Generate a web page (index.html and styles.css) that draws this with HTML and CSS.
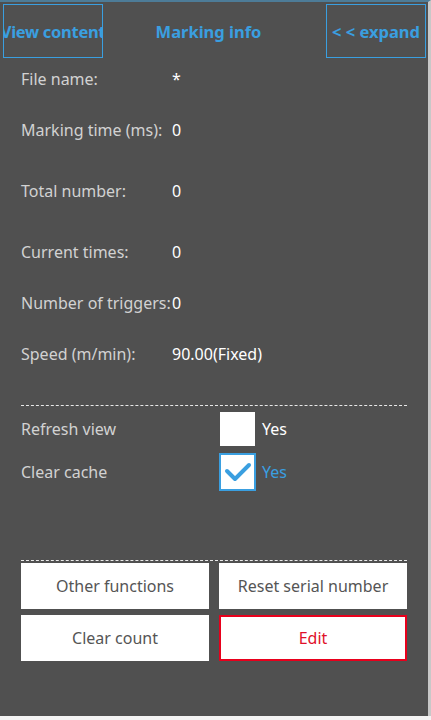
FILE: index.html
```html
<!DOCTYPE html>
<html lang="en">
<head>
    <meta charset="UTF-8">
    <meta name="viewport" content="width=device-width, initial-scale=1.0">
    <title>Marking info</title>
    <link rel="stylesheet" href="styles.css">
</head>
<body>
    <div class="panel">
        <div class="header">
            <div class="tab-btn"><span>View content</span></div>
            <div class="title">Marking info</div>
            <div class="tab-btn"><span>&lt; &lt; expand</span></div>
        </div>

        <div class="info">
            <div class="row"><span class="label">File name:</span><span class="value">*</span></div>
            <div class="row"><span class="label">Marking time (ms):</span><span class="value">0</span></div>
            <div class="row wide"><span class="label">Total number:</span><span class="value">0</span></div>
            <div class="row wide"><span class="label">Current times:</span><span class="value">0</span></div>
            <div class="row"><span class="label">Number of triggers:</span><span class="value">0</span></div>
            <div class="row"><span class="label">Speed (m/min):</span><span class="value">90.00(Fixed)</span></div>
        </div>

        <div class="divider"></div>

        <div class="options">
            <div class="opt">
                <span class="label">Refresh view</span>
                <span class="check"></span>
                <span class="yes">Yes</span>
            </div>
            <div class="opt">
                <span class="label">Clear cache</span>
                <span class="check checked">
                    <svg width="28" height="22" viewBox="0 0 28 22">
                        <path d="M3 10 L11 18 L25 4" fill="none" stroke="#3a9fe0" stroke-width="4" stroke-linecap="round" stroke-linejoin="round"/>
                    </svg>
                </span>
                <span class="yes active">Yes</span>
            </div>
        </div>

        <div class="divider low"></div>

        <div class="actions">
            <button>Other functions</button>
            <button>Reset serial number</button>
            <button>Clear count</button>
            <button class="danger">Edit</button>
        </div>
    </div>
</body>
</html>
```

FILE: styles.css
```css
html, body {
    margin: 0;
    padding: 0;
}
body {
    background: #f4f4f4;
    font-family: "Noto Sans", "Open Sans", sans-serif;
    width: 431px;
    height: 720px;
    overflow: hidden;
}
.panel {
    width: 431px;
    height: 716px;
    background: #505050;
    border-top: 2px solid #4d7c98;
    border-right: 3px solid #c8c8c8;
    box-sizing: border-box;
}
.header {
    display: flex;
    align-items: center;
    padding: 2px 2px 0 3px;
    height: 56px;
    box-sizing: border-box;
}
.tab-btn {
    flex: 0 0 auto;
    width: 98px;
    height: 52px;
    border: 1px solid #3a9fe0;
    display: flex;
    align-items: center;
    justify-content: center;
    overflow: hidden;
}
.tab-btn span,
.title {
    color: #3a9fe0;
    font-weight: bold;
    font-size: 16.5px;
    white-space: nowrap;
}
.tab-btn:first-child span {
    letter-spacing: -0.3px;
}
.title {
    flex: 1;
    text-align: center;
    padding-right: 12px;
}
.info {
    padding: 1px 21px 0;
}
.row {
    display: flex;
    align-items: center;
    height: 40px;
    font-size: 16px;
    margin-top: 11px;
}
.row:first-child {
    margin-top: 0;
}
.row.wide {
    margin-top: 21px;
}
.label {
    flex: 0 0 auto;
    color: #d2d2d2;
    min-width: 151px;
    white-space: nowrap;
    font-size: 16px;
}
.value {
    color: #fff;
}
.divider {
    margin: 31px 21px 0;
    border-top: 1px dashed #e8e8e8;
}
.divider.low {
    margin-top: 68px;
}
.options {
    padding: 3px 21px 0;
}
.opt {
    display: flex;
    align-items: center;
    height: 40px;
}
.opt + .opt {
    margin-top: 3px;
}
.opt .label {
    width: 199px;
}
.check {
    width: 35px;
    height: 34px;
    background: #fff;
    box-sizing: border-box;
    display: flex;
    align-items: center;
    justify-content: center;
}
.check.checked {
    width: 37px;
    height: 38px;
    border: 2px solid #3a9fe0;
    margin-left: -1px;
}
.yes {
    color: #fff;
    font-size: 16px;
    margin-left: 7px;
}
.yes.active {
    color: #3a9fe0;
    margin-left: 6px;
}
.actions {
    display: grid;
    grid-template-columns: 188px 188px;
    column-gap: 10px;
    row-gap: 6px;
    padding: 2px 21px 0;
}
button {
    height: 46px;
    background: #fff;
    border: none;
    color: #555;
    font-family: "Noto Sans", "Open Sans", sans-serif;
    font-size: 16px;
    padding: 0;
}
button.danger {
    border: 2px solid #e8001c;
    color: #e0102a;
}
```
